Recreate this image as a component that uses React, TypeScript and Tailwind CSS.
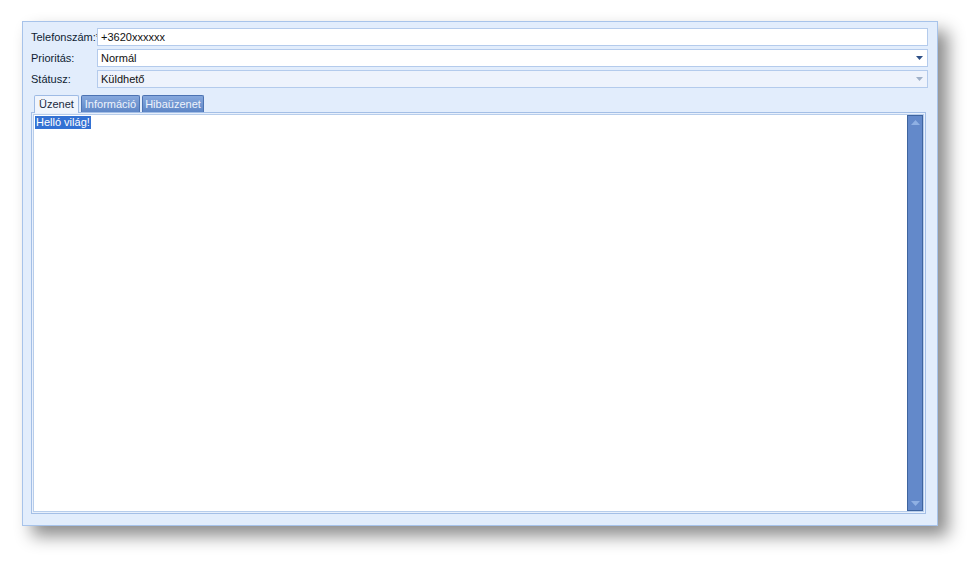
const font = "font-['Liberation_Sans','Tahoma',sans-serif]";

const Field = ({
  label,
  value,
  combo,
  disabled,
}: {
  label: string;
  value: string;
  combo?: boolean;
  disabled?: boolean;
}) => (
  <div className="flex items-center h-[18px]">
    <div className="w-[66px] shrink-0 text-[11px] text-[#0f1d33] leading-none whitespace-nowrap">{label}</div>
    <div
      className={`flex-1 h-[18px] flex items-center border border-[#b4cbec] px-[3px] ${
        disabled ? "bg-[#eef3fc]" : "bg-white"
      }`}
    >
      <span className="flex-1 text-[11px] text-[#111] leading-none">{value}</span>
      {combo && (
        <svg width="7" height="4" viewBox="0 0 7 4" className="mr-[1px]">
          <path d="M0 0h7L3.5 4z" fill={disabled ? "#9fb0c8" : "#2d4f86"} />
        </svg>
      )}
    </div>
  </div>
);

const Tab = ({ label, active, w }: { label: string; active?: boolean; w: string }) =>
  active ? (
    <div
      className={`${w} h-[18px] flex items-center justify-center rounded-t-[2px] border border-b-0 border-[#9ebbe5] bg-[#f0f5fd] text-[11px] text-[#1b2a40] leading-none relative top-[1px]`}
    >
      {label}
    </div>
  ) : (
    <div
      className={`${w} h-[17px] flex items-center justify-center rounded-t-[2px] border border-b-0 border-[#4c73b3] bg-gradient-to-b from-[#86a8dd] to-[#5e86c6] text-[11px] text-[#eef3fc] leading-none`}
    >
      {label}
    </div>
  );

export default function App() {
  return (
    <div className={`w-[980px] h-[568px] bg-white pt-[21px] pl-[22px] ${font}`}>
      <div className="w-[916px] h-[505px] bg-[#e2edfc] border border-[#a7c3ea] shadow-[10px_10px_16px_rgba(0,0,0,0.45)] flex flex-col pl-[8px] pr-[9px] pt-[6px] pb-[11px]">
        <div className="flex flex-col gap-[3px]">
          <Field label="Telefonszám:*" value="+3620xxxxxx" />
          <Field label="Prioritás:" value="Normál" combo />
          <Field label="Státusz:" value="Küldhető" combo disabled />
        </div>
        <div className="flex items-end gap-[2px] pl-[3px] mt-[6px] h-[18px] mr-[2px]">
          <Tab label="Üzenet" active w="w-[45px]" />
          <Tab label="Információ" w="w-[59px]" />
          <Tab label="Hibaüzenet" w="w-[62px]" />
        </div>
        <div className="flex-1 flex border border-[#a4bfe6] bg-[#e8f0fc] p-[1px] mr-[2px]">
          <div className="flex-1 flex border border-[#b7cdeb] bg-white">
            <div className="flex-1 pl-[1px] pt-[1px] text-[11px] leading-[13px]">
              <div className="w-fit bg-[#3371d3] text-white px-[1px]">Helló világ!</div>
            </div>
            <div className="w-[16px] bg-[#6389ca] border border-[#3f649f] flex flex-col items-center justify-between py-[4px]">
              <svg width="9" height="5" viewBox="0 0 9 5">
                <path d="M0 5L4.5 0L9 5z" fill="#8fb0e3" />
              </svg>
              <svg width="9" height="5" viewBox="0 0 9 5">
                <path d="M0 0h9L4.5 5z" fill="#8fb0e3" />
              </svg>
            </div>
          </div>
        </div>
      </div>
    </div>
  );
}
